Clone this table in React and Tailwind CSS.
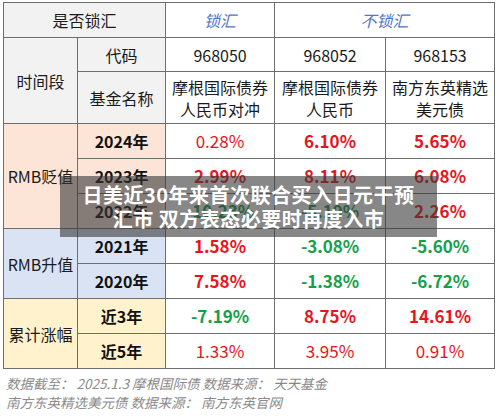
const RED = "text-[#e8141c]";
const GREEN = "text-[#14a04a]";

const rows = [
  { group: "RMB贬值", span: 3, bg: "bg-[#fce4d6]", label: "2024年", vals: [["0.28%", RED, false], ["6.10%", RED, true], ["5.65%", RED, true]] },
  { label: "2023年", bg: "bg-[#fce4d6]", vals: [["2.99%", RED, true], ["8.11%", RED, true], ["6.08%", RED, true]] },
  { label: "2022年", bg: "bg-[#fce4d6]", vals: [["-10.23%", GREEN, true], ["-5.19%", GREEN, true], ["2.26%", RED, true]] },
  { group: "RMB升值", span: 2, bg: "bg-[#dae3f3]", label: "2021年", vals: [["1.58%", RED, true], ["-3.08%", GREEN, true], ["-5.60%", GREEN, true]] },
  { label: "2020年", bg: "bg-[#dae3f3]", vals: [["7.58%", RED, true], ["-1.38%", GREEN, true], ["-6.72%", GREEN, true]] },
  { group: "累计涨幅", span: 2, bg: "bg-[#fff2cc]", label: "近3年", vals: [["-7.19%", GREEN, true], ["8.75%", RED, true], ["14.61%", RED, true]] },
  { label: "近5年", bg: "bg-[#fff2cc]", vals: [["1.33%", RED, false], ["3.95%", RED, false], ["0.91%", RED, false]] },
];

const cell = "border border-[#6e6e6e] text-center align-middle p-0";

export default function App() {
  return (
    <div
      className="relative w-[500px] h-[416px] bg-white overflow-hidden pl-[3px] pt-[2px] text-[#1a1a1a]"
      style={{ fontFamily: '"Noto Sans CJK SC", "Noto Sans", sans-serif' }}
    >
      <table className="table-fixed border-collapse w-[491px] text-[16px] leading-[22px]">
        <colgroup>
          <col className="w-[74px]" />
          <col className="w-[88px]" />
          <col className="w-[109px]" />
          <col className="w-[111px]" />
          <col className="w-[109px]" />
        </colgroup>
        <tbody>
          <tr className="h-[35px]">
            <td colSpan={2} className={`${cell} bg-[#f2f2f2]`}>是否锁汇</td>
            <td className={`${cell} italic text-[#4f78c8]`}>锁汇</td>
            <td colSpan={2} className={`${cell} italic text-[#4f78c8]`}>不锁汇</td>
          </tr>
          <tr className="h-[34px]">
            <td rowSpan={2} className={`${cell} bg-[#f2f2f2]`}>时间段</td>
            <td className={`${cell} bg-[#f2f2f2]`}>代码</td>
            <td className={cell}>968050</td>
            <td className={cell}>968052</td>
            <td className={cell}>968153</td>
          </tr>
          <tr className="h-[52px]">
            <td className={`${cell} bg-[#f2f2f2]`}>基金名称</td>
            <td className={cell}>摩根国际债券<br />人民币对冲</td>
            <td className={cell}>摩根国际债券<br />人民币</td>
            <td className={cell}>南方东英精选<br />美元债</td>
          </tr>
          {rows.map((r) => (
            <tr key={r.label} className="h-[35px]">
              {r.group && (
                <td rowSpan={r.span} className={`${cell} ${r.bg}`}>{r.group}</td>
              )}
              <td className={`${cell} ${r.bg} font-bold text-[#111]`}>{r.label}</td>
              {r.vals.map(([v, color, bold], i) => (
                <td key={i} className={`${cell} ${color} ${bold ? "font-bold" : ""} text-[17px]`}>
                  {v}
                </td>
              ))}
            </tr>
          ))}
        </tbody>
      </table>

      <div className="pt-[5px] pl-[3px] italic text-[13.5px] leading-[19px] text-[#8a8a8a]">
        <p>数据截至： 2025.1.3 摩根国际债 数据来源： 天天基金</p>
        <p>南方东英精选美元债 数据来源： 南方东英官网</p>
      </div>

      {/* headline banner laid over the table */}
      <div className="absolute left-[60px] top-[176px] w-[377px] h-[61px] bg-[rgba(55,55,55,0.6)] flex flex-col items-center justify-center text-white font-bold text-[20px] leading-[24px] tracking-[0.5px]">
        <p>日美近30年来首次联合买入日元干预</p>
        <p>汇市 双方表态必要时再度入市</p>
      </div>
    </div>
  );
}
